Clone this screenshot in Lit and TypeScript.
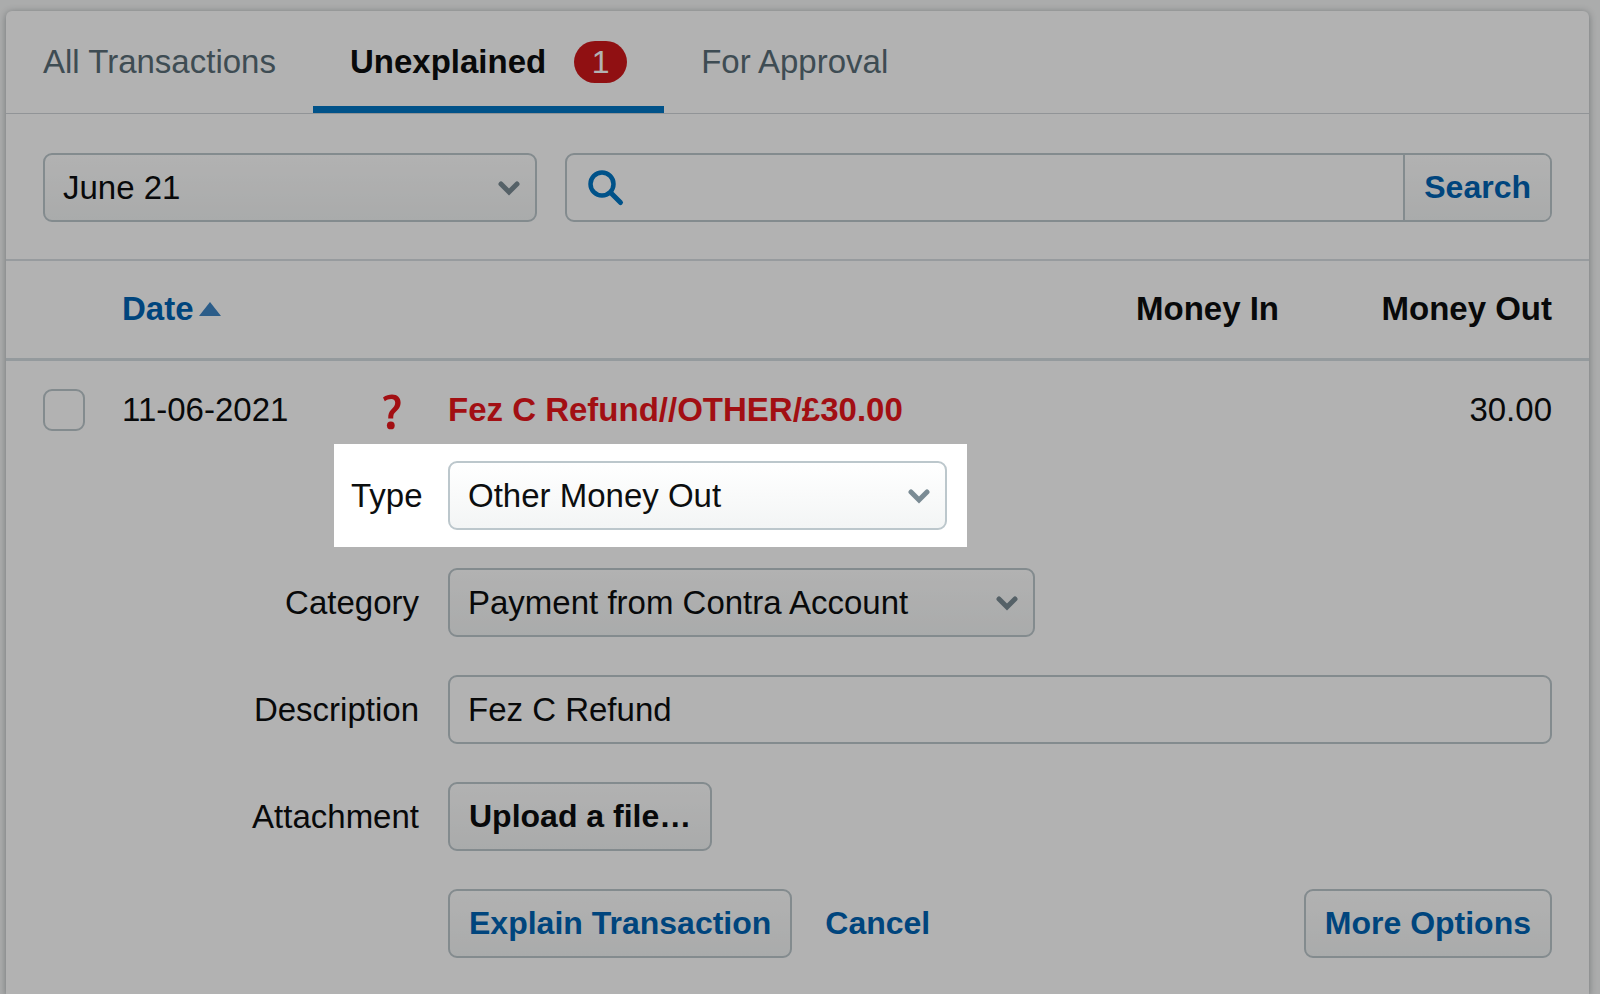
import { LitElement, html, css } from "lit";
import { customElement, state } from "lit/decorators.js";

const chevron = html`<svg class="chevron" viewBox="0 0 22 16" aria-hidden="true">
  <path d="M3 4 L11 12 L19 4" fill="none" stroke="currentColor" stroke-width="5" stroke-linecap="round" />
</svg>`;

const TABS = [
  { id: "all", label: "All Transactions", count: 0 },
  { id: "unexplained", label: "Unexplained", count: 1 },
  { id: "approval", label: "For Approval", count: 0 },
];

@customElement("app-root")
export class AppRoot extends LitElement {
  @state() private active = "unexplained";

  static styles = css`
    :host {
      display: block;
      min-height: 100vh;
      box-sizing: border-box;
      padding: 11px 11px 0 6px;
      overflow: hidden;
      background: #f5f6f6;
      color: #0c0e0f;
      font: 33px/40px "Liberation Sans", Arial, sans-serif;
    }
    *, *::before, *::after { box-sizing: border-box; }
    .card {
      min-height: calc(100vh - 11px);
      background: #fff;
      border-radius: 6px 6px 0 0;
      box-shadow: 0 1px 7px rgba(40, 55, 60, 0.4);
    }
    .tabs {
      display: flex;
      height: 103px;
      border-bottom: 1px solid #d0d5d8;
    }
    .tab {
      display: flex;
      align-items: center;
      gap: 28px;
      padding: 0 37px;
      border-top: 7px solid transparent;
      border-bottom: 7px solid transparent;
      color: #5a6e78;
      text-decoration: none;
    }
    .tab.active {
      border-bottom-color: #0076c5;
      color: #0c0e0f;
      font-weight: bold;
    }
    .badge {
      min-width: 53px;
      padding: 1px 12px;
      border-radius: 21px;
      background: #cf181b;
      color: #fff;
      font-size: 32px;
      font-weight: normal;
      text-align: center;
    }
    .filters {
      display: grid;
      grid-template-columns: 494px 1fr;
      gap: 28px;
      padding: 39px 37px 37px;
      border-bottom: 2px solid #d8dfe3;
    }
    .field {
      display: block;
      width: 100%;
      height: 69px;
      padding: 0 18px;
      border: 2px solid #bcc7cc;
      border-radius: 9px;
      background: #fff;
      color: #0c0e0f;
      font: inherit;
      outline: none;
    }
    .select {
      position: relative;
    }
    .select .field {
      appearance: none;
      padding-right: 60px;
      background: linear-gradient(#fff, #f3f5f5);
    }
    .chevron {
      position: absolute;
      right: 17px;
      top: 27px;
      width: 22px;
      height: 16px;
      color: #7a8b94;
      pointer-events: none;
    }
    .search {
      display: flex;
      height: 69px;
      border: 2px solid #bcc7cc;
      border-radius: 9px;
      overflow: hidden;
    }
    .search label {
      display: flex;
      flex: 1;
      align-items: center;
      gap: 12px;
      padding-left: 20px;
    }
    .search svg { width: 38px; height: 38px; color: #0076c5; }
    .search input {
      flex: 1;
      min-width: 0;
      border: 0;
      background: none;
      font: inherit;
      outline: none;
    }
    .search button {
      padding: 0 19px 2px;
      border: 0;
      border-left: 2px solid #bcc7cc;
      background: linear-gradient(#fff, #f3f5f5);
      color: #0064b4;
      font: bold 32px/40px "Liberation Sans", Arial, sans-serif;
    }
    .button {
      height: 69px;
      padding: 0 19px 2px;
      border: 2px solid #bcc7cc;
      border-radius: 9px;
      background: linear-gradient(#fff, #f3f5f5);
      color: #0c0e0f;
      font: bold 32px/40px "Liberation Sans", Arial, sans-serif;
      white-space: nowrap;
    }
    .button.blue { color: #0064b4; }
    table {
      width: 100%;
      border-collapse: collapse;
      table-layout: fixed;
    }
    th, td { padding: 0; text-align: left; white-space: nowrap; }
    th {
      height: 98px;
      border-bottom: 3px solid #d5dde1;
    }
    td { height: 87px; padding-top: 13px; }
    .pick { width: 116px; padding-left: 37px; }
    .date { width: 252px; }
    .mark { width: 74px; }
    .in { width: 236px; text-align: right; }
    .out { width: 310px; padding-right: 37px; text-align: right; }
    .sort {
      display: inline-flex;
      align-items: center;
      gap: 5px;
      color: #0064b4;
      text-decoration: none;
    }
    .sort svg { width: 22px; height: 14px; fill: #4086c5; }
    .check {
      appearance: none;
      display: block;
      width: 42px;
      height: 42px;
      margin: 0;
      border: 2px solid #bcc7cc;
      border-radius: 9px;
      background: #fff;
    }
    .query { display: block; width: 20px; height: 40px; margin-left: 8px; fill: #e9161c; }
    .name { color: #e9161c; font-weight: bold; }
    .form {
      display: grid;
      gap: 38px;
      padding: 15px 37px 37px;
    }
    .row {
      display: grid;
      grid-template-columns: 376px 1fr;
      align-items: center;
      column-gap: 29px;
      min-height: 69px;
    }
    .row > label { text-align: right; }
    .spot {
      position: relative;
      z-index: 1;
      display: grid;
      grid-template-columns: 68px 499px;
      align-items: center;
      gap: 29px;
      justify-self: start;
      margin: -17px 0 -17px 291px;
      padding: 17px 20px 17px 17px;
      box-shadow: 0 0 0 200vmax rgba(0, 0, 0, 0.3);
    }
    .spot > label { white-space: nowrap; }
    .wide { width: 587px; }
    .actions { display: flex; align-items: center; gap: 33px; padding-left: 405px; }
    .cancel {
      padding-bottom: 2px;
      color: #0064b4;
      font-size: 32px;
      font-weight: bold;
      text-decoration: none;
    }
    .more { margin-left: auto; }
  `;

  private tab(t: { id: string; label: string; count: number }) {
    const on = t.id === this.active;
    return html`<a class="tab ${on ? "active" : ""}" href="#${t.id}" @click=${() => (this.active = t.id)}>
      <span>${t.label}</span>${t.count ? html`<span class="badge">${t.count}</span>` : ""}
    </a>`;
  }

  render() {
    return html`
      <main class="card">
        <nav class="tabs">${TABS.map((t) => this.tab(t))}</nav>
        <div class="filters">
          <div class="select">
            <select class="field" aria-label="Period"><option>June 21</option></select>
            ${chevron}
          </div>
          <form class="search" @submit=${(e: Event) => e.preventDefault()}>
            <label>
              <svg viewBox="0 0 38 38" aria-hidden="true" fill="none" stroke="currentColor">
                <circle cx="15" cy="15" r="11.5" stroke-width="4.5" />
                <path d="M24 24 L33.5 33.5" stroke-width="5" stroke-linecap="round" />
              </svg>
              <input type="text" aria-label="Search transactions" />
            </label>
            <button type="submit">Search</button>
          </form>
        </div>
        <table>
          <thead>
            <tr>
              <th class="pick"></th>
              <th class="date">
                <a class="sort" href="#date">Date<svg viewBox="0 0 22 14" aria-hidden="true"><path d="M0 14 L11 0 L22 14 Z" /></svg></a>
              </th>
              <th class="mark"></th>
              <th></th>
              <th class="in">Money In</th>
              <th class="out">Money Out</th>
            </tr>
          </thead>
          <tbody>
            <tr>
              <td class="pick"><input class="check" type="checkbox" aria-label="Select transaction" /></td>
              <td>11-06-2021</td>
              <td>
                <svg class="query" viewBox="0 -4 20 40" role="img" aria-label="Unexplained">
                  <path d="M1 3.6 C4 1.4 7 0.6 10 0.6 C15.5 0.6 18.6 4 18.6 8.6 C18.6 13 16.4 15.6 13.6 18 C11.6 19.8 11.2 21 11.2 24.4 L6.2 24.4 C6.2 20 7 17.8 9.4 15.4 C11.8 13 13.2 11.4 13.2 8.8 C13.2 6.4 11.8 5 9.2 5 C7 5 4.8 5.8 2.8 7.2 Z" />
                  <circle cx="8.8" cy="31.4" r="3.9" />
                </svg>
              </td>
              <td class="name">Fez C Refund//OTHER/£30.00</td>
              <td class="in"></td>
              <td class="out">30.00</td>
            </tr>
          </tbody>
        </table>
        <form class="form" @submit=${(e: Event) => e.preventDefault()}>
          <div class="spot">
            <label for="type">Type</label>
            <div class="select">
              <select class="field" id="type"><option>Other Money Out</option></select>
              ${chevron}
            </div>
          </div>
          <div class="row">
            <label for="category">Category</label>
            <div class="select wide">
              <select class="field" id="category"><option>Payment from Contra Account</option></select>
              ${chevron}
            </div>
          </div>
          <div class="row">
            <label for="description">Description</label>
            <input class="field" id="description" type="text" value="Fez C Refund" />
          </div>
          <div class="row">
            <label for="upload">Attachment</label>
            <div><button class="button" id="upload" type="button">Upload a file…</button></div>
          </div>
          <div class="actions">
            <button class="button blue" type="submit">Explain Transaction</button>
            <a class="cancel" href="#cancel">Cancel</a>
            <button class="button blue more" type="button">More Options</button>
          </div>
        </form>
      </main>
    `;
  }
}
